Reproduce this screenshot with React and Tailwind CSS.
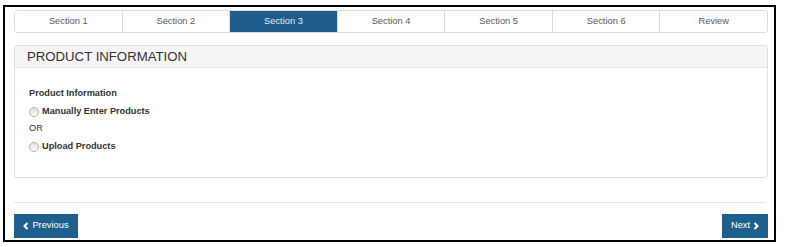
import React from 'react';

const tabs = ['Section 1', 'Section 2', 'Section 3', 'Section 4', 'Section 5', 'Section 6', 'Review'];

function Radio() {
  return (
    <span className="inline-block w-[10px] h-[10px] rounded-full border border-[#b0b0b0] bg-gradient-to-b from-[#e2e2e2] to-[#fafafa] mr-[3px]" />
  );
}

function Chevron({ dir }) {
  return (
    <svg width="6" height="8" viewBox="0 0 6 8" className="inline-block">
      {dir === 'left' ? (
        <polyline points="4.5,1 1.5,4 4.5,7" fill="none" stroke="white" strokeWidth="2" />
      ) : (
        <polyline points="1.5,1 4.5,4 1.5,7" fill="none" stroke="white" strokeWidth="2" />
      )}
    </svg>
  );
}

export default function App() {
  return (
    <div className="bg-white w-[786px] h-[247px] pt-[5px] pl-[3px]" style={{ fontFamily: '"Liberation Sans", Arial, sans-serif' }}>
      <div className="w-[773px] h-[237px] border-2 border-black pt-[3px] pl-[9px] pr-[6px] flex flex-col">
        <div className="flex h-[23px] border border-[#dcdcdc] rounded-[3px] overflow-hidden">
          {tabs.map((t, i) => (
            <div
              key={t}
              className={`flex-1 flex items-center justify-center text-[9.3px] ${i > 0 ? 'border-l border-[#dcdcdc]' : ''} ${i === 2 ? 'bg-[#1f5c89] text-[#e4edf5]' : 'bg-white text-[#5a5a5a]'}`}
            >
              {t}
            </div>
          ))}
        </div>

        <div className="mt-[12px] h-[133px] border border-[#e0e0e0] rounded-[3px] flex flex-col">
          <div className="h-[22px] bg-[#f5f5f5] border-b border-[#e3e3e3] flex items-center pl-[12px] text-[13.2px] text-[#333]">
            PRODUCT INFORMATION
          </div>
          <div className="pl-[14px] pt-[17px] text-[9.2px] text-[#333] leading-[17.7px]">
            <div className="font-bold">Product Information</div>
            <div className="flex items-center font-bold"><Radio />Manually Enter Products</div>
            <div>OR</div>
            <div className="flex items-center font-bold"><Radio />Upload Products</div>
          </div>
        </div>

        <div className="mt-[24px] h-px bg-[#e6e6e6] mr-[2px]" />

        <div className="mt-[11px] flex justify-between">
          <button className="h-[24px] w-[64px] bg-[#1f5f8e] text-white text-[9.3px] flex items-center justify-center gap-[3px]">
            <Chevron dir="left" />Previous
          </button>
          <button className="h-[24px] w-[46px] bg-[#1f5f8e] text-white text-[9.3px] flex items-center justify-center gap-[3px]">
            Next<Chevron dir="right" />
          </button>
        </div>
      </div>
    </div>
  );
}
